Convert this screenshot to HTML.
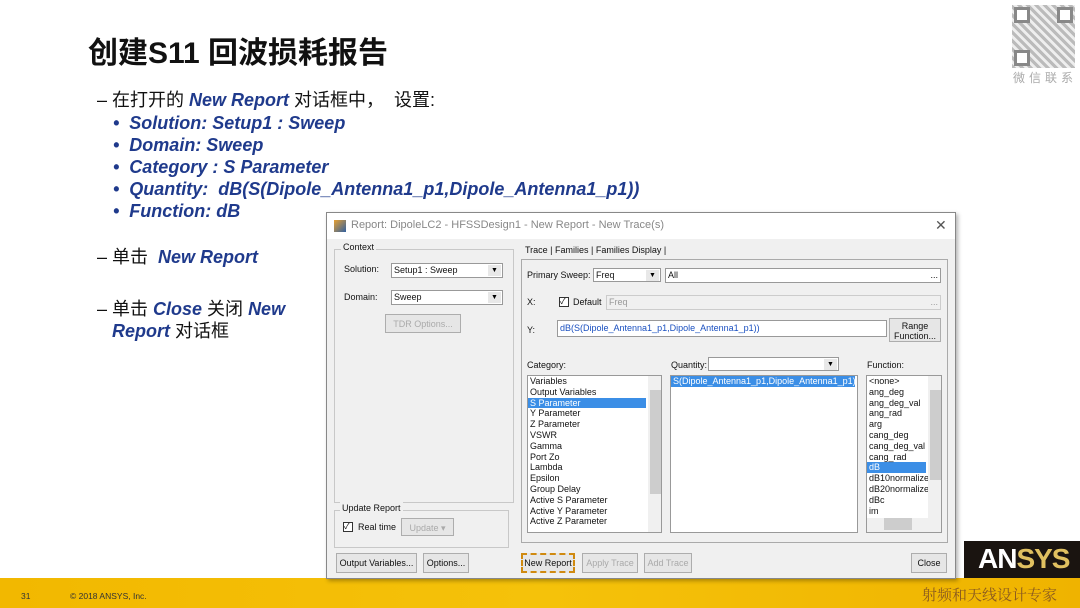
<!DOCTYPE html>
<html><head><meta charset="utf-8"><style>
*{margin:0;padding:0;box-sizing:border-box}
body{width:1080px;height:608px;position:relative;overflow:hidden;background:#fff;font-family:"Liberation Sans","Noto Sans CJK SC",sans-serif}
.a{position:absolute}
.t{font-size:18px;color:#111;white-space:nowrap}
.b{color:#1f3a8c;font-weight:bold;font-style:italic}
.w{font-family:"Liberation Sans",sans-serif;font-size:9px;color:#111;white-space:nowrap;line-height:13px}
.box{position:absolute;background:#fff;border:1px solid #999;overflow:hidden}
.box > .w{display:block;line-height:13px}
.btn{position:absolute;background:#e6e6e6;border:1px solid #adadad;font-family:"Liberation Sans",sans-serif;font-size:9px;text-align:center;line-height:18px;color:#111;white-space:nowrap}
.dd{position:absolute;width:13px;height:11px;right:1px;top:1px;background:#e8e8e8;font-size:7px;text-align:center;line-height:11px}
.grp{position:absolute;border:1px solid #c8c8c8}
.li div{height:10.8px;line-height:10.8px;padding-left:2px}
.sel{background:#3b8ee6;color:#fff}
</style></head><body>
<div class="a" style="left:88px;top:28px;font-size:30px;font-weight:bold;color:#111">创建S11 回波损耗报告</div>
<div class="a t" style="left:97px;top:86px">– 在打开的 <span class="b">New Report</span> 对话框中，&nbsp; 设置:</div>
<div class="a t b" style="left:113px;top:112px;line-height:22px">•&nbsp; Solution: Setup1 : Sweep<br>•&nbsp; Domain: Sweep<br>•&nbsp; Category : S Parameter<br>•&nbsp; Quantity:&nbsp; dB(S(Dipole_Antenna1_p1,Dipole_Antenna1_p1))<br>•&nbsp; Function: dB</div>
<div class="a t" style="left:97px;top:243px">– 单击&nbsp; <span class="b">New Report</span></div>
<div class="a t" style="left:97px;top:298px;line-height:22px">– 单击 <span class="b">Close</span> 关闭 <span class="b">New</span><br>&nbsp;&nbsp;&nbsp;<span class="b">Report</span> 对话框</div>
<!-- QR -->
<div class="a" style="left:1012px;top:5px;width:63px;height:63px;background:repeating-linear-gradient(45deg,#bbb 0 3px,#eee 3px 6px)"></div>
<div class="a" style="left:1014px;top:7px;width:16px;height:16px;border:3px solid #888;background:#fff"></div>
<div class="a" style="left:1057px;top:7px;width:16px;height:16px;border:3px solid #888;background:#fff"></div>
<div class="a" style="left:1014px;top:50px;width:16px;height:16px;border:3px solid #888;background:#fff"></div>
<div class="a" style="left:1013px;top:69px;font-size:12px;color:#aaa;letter-spacing:4px">微信联系</div>
<!-- footer -->
<div class="a" style="left:0;top:578px;width:1080px;height:30px;background:linear-gradient(90deg,#f2b800,#f5c20a 50%,#efb300)"></div>
<div class="a" style="left:21px;top:591px;font-size:8.5px;color:#333">31</div>
<div class="a" style="left:70px;top:591px;font-size:8.5px;color:#333">© 2018 ANSYS, Inc.</div>
<div class="a" style="left:964px;top:541px;width:116px;height:37px;background:#1a1410"></div>
<div class="a" style="left:978px;top:543px;font-size:28px;font-weight:bold;color:#fff;letter-spacing:-1px">AN<span style="color:#e0c060">SYS</span></div>
<div class="a" style="left:922px;top:584px;font-size:15px;color:#8a5a20;font-family:'Noto Serif CJK SC',serif">射频和天线设计专家</div>
<!-- dialog -->
<div class="a" style="left:326px;top:212px;width:630px;height:367px;background:#f0f0f0;border:1px solid #888;box-shadow:2px 2px 4px rgba(0,0,0,.3)">
 <div class="a" style="left:0;top:0;width:628px;height:26px;background:#fff"></div>
 <div class="a" style="left:7px;top:7px;width:12px;height:12px;background:linear-gradient(135deg,#e8a030,#3060a0)"></div>
 <div class="a" style="left:24px;top:6px;font-family:'Liberation Sans',sans-serif;font-size:11px;color:#888">Report: DipoleLC2 - HFSSDesign1 - New Report - New Trace(s)</div>
 <div class="a" style="left:608px;top:4px;font-size:14px;color:#555">✕</div>
 <div class="grp" style="left:7px;top:36px;width:180px;height:254px"></div>
 <div class="a w" style="left:14px;top:28px;background:#f0f0f0;padding:0 2px">Context</div>
 <div class="a w" style="left:17px;top:50px">Solution:</div>
 <div class="box" style="left:64px;top:50px;width:112px;height:15px"><span class="w" style="padding-left:2px">Setup1 : Sweep</span><div class="dd">▼</div></div>
 <div class="a w" style="left:17px;top:78px">Domain:</div>
 <div class="box" style="left:64px;top:77px;width:112px;height:15px"><span class="w" style="padding-left:2px">Sweep</span><div class="dd">▼</div></div>
 <div class="btn" style="left:58px;top:101px;width:76px;height:19px;color:#aaa">TDR Options...</div>
 <div class="grp" style="left:7px;top:297px;width:175px;height:38px"></div>
 <div class="a w" style="left:13px;top:289px;background:#f0f0f0;padding:0 2px">Update Report</div>
 <div class="a" style="left:16px;top:309px;width:10px;height:10px;border:1px solid #333;background:#fff;font-size:8px;line-height:8px">✓</div>
 <div class="a w" style="left:31px;top:308px">Real time</div>
 <div class="btn" style="left:74px;top:305px;width:53px;height:18px;color:#aaa">Update ▾</div>
 <div class="btn" style="left:9px;top:340px;width:81px;height:20px">Output Variables...</div>
 <div class="btn" style="left:96px;top:340px;width:46px;height:20px">Options...</div>
 <!-- right -->
 <div class="a w" style="left:198px;top:31px">Trace | Families | Families Display |</div>
 <div class="grp" style="left:194px;top:46px;width:427px;height:284px;border-color:#aaa"></div>
 <div class="a w" style="left:200px;top:56px">Primary Sweep:</div>
 <div class="box" style="left:266px;top:55px;width:68px;height:14px"><span class="w" style="padding-left:2px">Freq</span><div class="dd">▼</div></div>
 <div class="box" style="left:338px;top:55px;width:276px;height:15px"><span class="w" style="padding-left:2px">All</span><span class="w" style="position:absolute;right:2px;top:0">...</span></div>
 <div class="a w" style="left:200px;top:83px">X:</div>
 <div class="a" style="left:232px;top:84px;width:10px;height:10px;border:1px solid #333;background:#fff;font-size:8px;line-height:8px">✓</div>
 <div class="a w" style="left:246px;top:83px">Default</div>
 <div class="box" style="left:279px;top:82px;width:335px;height:15px;background:#f0f0f0;border-color:#ccc"><span class="w" style="padding-left:2px;color:#999">Freq</span><span class="w" style="position:absolute;right:2px;top:0;color:#999">...</span></div>
 <div class="a w" style="left:200px;top:111px">Y:</div>
 <div class="box" style="left:230px;top:107px;width:330px;height:17px"><span class="w" style="padding-left:2px;color:#1a50c0;line-height:15px">dB(S(Dipole_Antenna1_p1,Dipole_Antenna1_p1))</span></div>
 <div class="btn" style="left:562px;top:105px;width:52px;height:24px;line-height:10px;padding-top:2px">Range<br>Function...</div>
 <div class="a w" style="left:200px;top:146px">Category:</div>
 <div class="a w" style="left:344px;top:146px">Quantity:</div>
 <div class="box" style="left:381px;top:144px;width:131px;height:14px"><div class="dd">▼</div></div>
 <div class="a w" style="left:540px;top:146px">Function:</div>
 <div class="box li w" style="left:200px;top:162px;width:135px;height:158px">
  <div>Variables</div><div>Output Variables</div><div class="sel" style="width:118px">S Parameter</div><div>Y Parameter</div><div>Z Parameter</div><div>VSWR</div><div>Gamma</div><div>Port Zo</div><div>Lambda</div><div>Epsilon</div><div>Group Delay</div><div>Active S Parameter</div><div>Active Y Parameter</div><div>Active Z Parameter</div>
  <div class="a" style="right:0;top:0;width:13px;height:156px;background:#f0f0f0"><div style="margin-top:14px;height:104px;background:#cdcdcd"></div></div>
 </div>
 <div class="box li w" style="left:343px;top:162px;width:188px;height:158px"><div class="sel" style="width:184px">S(Dipole_Antenna1_p1,Dipole_Antenna1_p1)</div></div>
 <div class="box li w" style="left:539px;top:162px;width:76px;height:158px">
  <div>&lt;none&gt;</div><div>ang_deg</div><div>ang_deg_val</div><div>ang_rad</div><div>arg</div><div>cang_deg</div><div>cang_deg_val</div><div>cang_rad</div><div class="sel" style="width:59px">dB</div><div>dB10normalize</div><div>dB20normalize</div><div>dBc</div><div>im</div>
  <div class="a" style="right:0;top:0;width:13px;height:142px;background:#f0f0f0"><div style="margin-top:14px;height:90px;background:#cdcdcd"></div></div>
  <div class="a" style="left:0;bottom:0;width:74px;height:14px;background:#f0f0f0"><div style="margin-left:15px;width:28px;height:12px;background:#cdcdcd"></div></div>
 </div>
 <div class="btn" style="left:194px;top:340px;width:54px;height:20px;border:2px dashed #d08a10;line-height:16px">New Report</div>
 <div class="btn" style="left:255px;top:340px;width:56px;height:20px;color:#aaa">Apply Trace</div>
 <div class="btn" style="left:317px;top:340px;width:48px;height:20px;color:#aaa">Add Trace</div>
 <div class="btn" style="left:584px;top:340px;width:36px;height:20px">Close</div>
</div>
</body></html>
